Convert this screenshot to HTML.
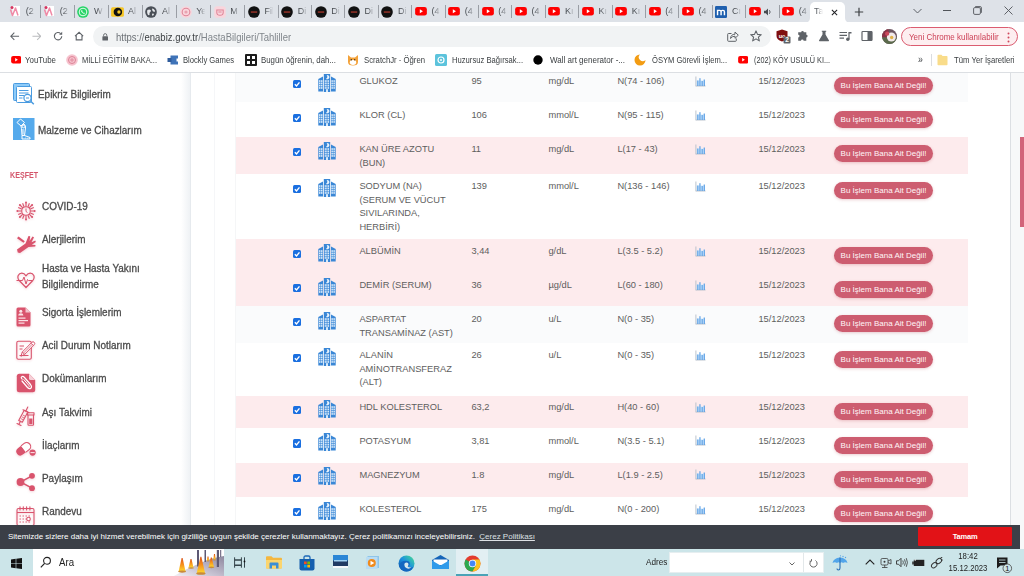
<!DOCTYPE html>
<html lang="tr"><head><meta charset="utf-8"><title>Tahliller</title>
<style>
*{box-sizing:border-box;margin:0;padding:0}
html,body{width:1024px;height:576px;overflow:hidden;background:#fff;font-family:"Liberation Sans",Arial,sans-serif;}
.a{position:absolute}
#tabs{left:0;top:0;width:1024px;height:22.4px;background:#dee2e8}
#tool{left:0;top:23px;width:1024px;height:26px;background:#fff}
#bm{left:0;top:49px;width:1024px;height:24px;background:#fff;border-bottom:1px solid #dcdfe3}
.tab{position:absolute;top:0;height:23px;font-size:9px;color:#484c51;line-height:23px;white-space:nowrap;overflow:hidden}
.tsep{position:absolute;top:4.5px;width:1px;height:13px;background:#9a9ea5}
.bmt{position:absolute;top:0;font-size:9px;line-height:22px;color:#3c4043;white-space:nowrap;transform-origin:0 50%;transform:scaleX(.875)}
#page{left:0;top:73px;width:1024px;height:452px;background:#fff;overflow:hidden}
.st{position:absolute;font-size:10.5px;color:#4a4a4a;white-space:nowrap;transform-origin:0 50%;transform:scaleX(.945);line-height:16px;-webkit-text-stroke:.3px #4a4a4a}
.row{position:absolute;left:235.5px;width:732.5px}
.c{position:absolute;font-size:9.3px;line-height:13.3px;color:#5e5e5e;white-space:nowrap}
.btn{position:absolute;left:834px;width:99px;height:17.2px;border-radius:9px;background:#cd5d70;color:#fff6f7;font-size:8px;line-height:17.2px;text-align:center;white-space:nowrap;box-shadow:0 1px 3px rgba(180,60,70,.25)}
.cb{position:absolute;left:292.7px;width:8.3px;height:8.3px;border-radius:1.5px;background:#1a6fe0}
#cookie{left:0;top:525px;width:1024px;height:23.5px;background:#3b3f47;color:#fff;font-size:8px;line-height:24px}
#task{left:0;top:548.5px;width:1024px;height:27.5px;background:#cce5e9}
</style></head><body>

<svg width="0" height="0" style="position:absolute"><defs><symbol id="hosp" viewBox="0 0 18 18"><path d="M5.800 0H12.200V18H5.800Z" fill="#3a87d6"/><path d="M.3 5L5 2.600V17.600H.3Z" fill="#3a87d6"/><path d="M17.700 5L13 2.600V17.600H17.700Z" fill="#3a87d6"/><path d="M8.600 1A2.200 2.200 0 1 1 7.900 4.900A2.700 2.700 0 0 0 8.600 1Z" fill="#e8f3fd"/><rect x="1" y="6.2" width="1.500" height="1.700" fill="#d6e9fa"/><rect x="3" y="6.2" width="1.500" height="1.700" fill="#d6e9fa"/><rect x="13.4" y="6.2" width="1.500" height="1.700" fill="#d6e9fa"/><rect x="15.4" y="6.2" width="1.500" height="1.700" fill="#d6e9fa"/><rect x="6.7" y="6.2" width="1.200" height="1.700" fill="#d6e9fa"/><rect x="8.3" y="6.2" width="1.200" height="1.700" fill="#d6e9fa"/><rect x="9.9" y="6.2" width="1.200" height="1.700" fill="#d6e9fa"/><rect x="1" y="8.5" width="1.500" height="1.700" fill="#d6e9fa"/><rect x="3" y="8.5" width="1.500" height="1.700" fill="#d6e9fa"/><rect x="13.4" y="8.5" width="1.500" height="1.700" fill="#d6e9fa"/><rect x="15.4" y="8.5" width="1.500" height="1.700" fill="#d6e9fa"/><rect x="6.7" y="8.5" width="1.200" height="1.700" fill="#d6e9fa"/><rect x="8.3" y="8.5" width="1.200" height="1.700" fill="#d6e9fa"/><rect x="9.9" y="8.5" width="1.200" height="1.700" fill="#d6e9fa"/><rect x="1" y="10.8" width="1.500" height="1.700" fill="#d6e9fa"/><rect x="3" y="10.8" width="1.500" height="1.700" fill="#d6e9fa"/><rect x="13.4" y="10.8" width="1.500" height="1.700" fill="#d6e9fa"/><rect x="15.4" y="10.8" width="1.500" height="1.700" fill="#d6e9fa"/><rect x="6.7" y="10.8" width="1.200" height="1.700" fill="#d6e9fa"/><rect x="8.3" y="10.8" width="1.200" height="1.700" fill="#d6e9fa"/><rect x="9.9" y="10.8" width="1.200" height="1.700" fill="#d6e9fa"/><rect x="1" y="13.1" width="1.500" height="1.700" fill="#d6e9fa"/><rect x="3" y="13.1" width="1.500" height="1.700" fill="#d6e9fa"/><rect x="13.4" y="13.1" width="1.500" height="1.700" fill="#d6e9fa"/><rect x="15.4" y="13.1" width="1.500" height="1.700" fill="#d6e9fa"/><rect x="6.7" y="13.1" width="1.200" height="1.700" fill="#d6e9fa"/><rect x="8.3" y="13.1" width="1.200" height="1.700" fill="#d6e9fa"/><rect x="9.9" y="13.1" width="1.200" height="1.700" fill="#d6e9fa"/><rect x="8" y="15.200" width="2" height="2.800" fill="#d6e9fa"/></symbol><symbol id="chart" viewBox="0 0 11 11"><path d="M1.500 4.500H10V10H1.500Z" fill="#d3e9fc"/><path d="M.9 .5V10.300M.9 10H10.500" stroke="#b4bdc8" stroke-width=".9" fill="none"/><rect x="2.3" y="4.5" width="1.100" height="5.5" fill="#5199e3"/><rect x="4.4" y="2.2" width="1.100" height="7.8" fill="#5199e3"/><rect x="6.6" y="5" width="1.100" height="5" fill="#5199e3"/><rect x="8.7" y="3.5" width="1.100" height="6.5" fill="#5199e3"/></symbol></defs></svg>
<div id="tabs" class="a">
<svg class="a" style="left:9.0px;top:5.0px" width="12" height="12" viewBox="0 0 12 12"><rect x="3.500" y="1" width="7.500" height="10" fill="#fff"/><path d="M1.500 4.500L3.500 10.500L6.500 3L9 10.500" stroke="#f08aa6" stroke-width="1.500" fill="none" stroke-linejoin="round"/><circle cx="3" cy="2.500" r="1.500" fill="#d6335e"/></svg>
<div class="tab" style="left:25.7px;width:10px;-webkit-mask-image:linear-gradient(90deg,#000 30%,transparent 95%)">(2</div>
<svg class="a" style="left:43.1px;top:5.0px" width="12" height="12" viewBox="0 0 12 12"><rect x="3.500" y="1" width="7.500" height="10" fill="#fff"/><path d="M1.500 4.500L3.500 10.500L6.500 3L9 10.500" stroke="#f08aa6" stroke-width="1.500" fill="none" stroke-linejoin="round"/><circle cx="3" cy="2.500" r="1.500" fill="#d6335e"/></svg>
<div class="tab" style="left:59.8px;width:10px;-webkit-mask-image:linear-gradient(90deg,#000 30%,transparent 95%)">(2</div>
<div class="tsep" style="left:39.5px"></div>
<svg class="a" style="left:77.2px;top:5.5px" width="12" height="12" viewBox="0 0 15 15"><circle cx="7.500" cy="7.500" r="7.300" fill="#25d366"/><circle cx="7.500" cy="7.500" r="4.800" fill="none" stroke="#fff" stroke-width="1.100"/><path d="M5.500 5.200c-.5.500-.4 1.700.8 3s2.500 1.800 3.100 1.400l.4-.8-1.200-.7-.5.500c-.6-.3-1.300-1-1.600-1.600l.5-.5-.6-1.300z" fill="#fff"/></svg>
<div class="tab" style="left:93.9px;width:10px;-webkit-mask-image:linear-gradient(90deg,#000 30%,transparent 95%)">W</div>
<div class="tsep" style="left:73.6px"></div>
<svg class="a" style="left:110.8px;top:5.5px" width="13" height="12" viewBox="0 0 16 15"><rect x="0" y="1.500" width="16" height="12" rx="2" fill="#f6c624"/><circle cx="8.500" cy="7.500" r="5.300" fill="#111"/><circle cx="9.800" cy="7.500" r="2.100" fill="#f6c624"/></svg>
<div class="tab" style="left:128.0px;width:10px;-webkit-mask-image:linear-gradient(90deg,#000 30%,transparent 95%)">Al</div>
<div class="tsep" style="left:107.7px"></div>
<svg class="a" style="left:145.4px;top:5.5px" width="12" height="12" viewBox="0 0 15 15"><circle cx="7.500" cy="7.500" r="7.300" fill="#4a4f57"/><path d="M3 5c1.500-1 3-1 4 0s0 2.500-1 3 .5 3-1 3.500S2 8 3 5zM9 3c1.500 0 3 1.500 3.500 3s-1 1.500-2 1-2-3-1.500-4zM9.500 9.500c1 0 2 .5 1.500 1.500s-1.500 1.500-2 1 0-2.500.5-2.500z" fill="#e8eaed"/></svg>
<div class="tab" style="left:162.1px;width:10px;-webkit-mask-image:linear-gradient(90deg,#000 30%,transparent 95%)">Al</div>
<div class="tsep" style="left:141.8px"></div>
<svg class="a" style="left:179.5px;top:5.5px" width="12" height="12" viewBox="0 0 15 15"><circle cx="7.500" cy="7.500" r="7.300" fill="#f9d5dc"/><circle cx="7.500" cy="7.500" r="4.800" fill="none" stroke="#df8598" stroke-width="1.300"/><circle cx="7.500" cy="7.500" r="2" fill="#e9a3b1"/></svg>
<div class="tab" style="left:196.2px;width:10px;-webkit-mask-image:linear-gradient(90deg,#000 30%,transparent 95%)">Ye</div>
<div class="tsep" style="left:175.9px"></div>
<svg class="a" style="left:213.6px;top:5.5px" width="12" height="12" viewBox="0 0 15 15"><rect x=".3" y=".3" width="14.400" height="14.400" rx="3.500" fill="#f9d5dc"/><path d="M3.500 5H11.500V8Q11.500 11.500 7.500 11.500Q3.500 11.500 3.500 8Z" fill="none" stroke="#df8598" stroke-width="1.300"/><path d="M5.500 7.500H9.500" stroke="#df8598" stroke-width="1.200"/></svg>
<div class="tab" style="left:230.3px;width:10px;-webkit-mask-image:linear-gradient(90deg,#000 30%,transparent 95%)">M</div>
<div class="tsep" style="left:210.0px"></div>
<svg class="a" style="left:247.7px;top:5.5px" width="12" height="12" viewBox="0 0 15 15"><circle cx="7.500" cy="7.500" r="7.300" fill="#111"/><rect x="3.500" y="6.800" width="8" height="1.500" fill="#b5382c"/></svg>
<div class="tab" style="left:264.4px;width:10px;-webkit-mask-image:linear-gradient(90deg,#000 30%,transparent 95%)">Fil</div>
<div class="tsep" style="left:244.1px"></div>
<svg class="a" style="left:281.1px;top:5.5px" width="12" height="12" viewBox="0 0 15 15"><circle cx="7.500" cy="7.500" r="7.300" fill="#111"/><rect x="3.500" y="6.800" width="8" height="1.500" fill="#b5382c"/></svg>
<div class="tab" style="left:297.8px;width:10px;-webkit-mask-image:linear-gradient(90deg,#000 30%,transparent 95%)">Di</div>
<div class="tsep" style="left:277.5px"></div>
<svg class="a" style="left:314.5px;top:5.5px" width="12" height="12" viewBox="0 0 15 15"><circle cx="7.500" cy="7.500" r="7.300" fill="#111"/><rect x="3.500" y="6.800" width="8" height="1.500" fill="#b5382c"/></svg>
<div class="tab" style="left:331.2px;width:10px;-webkit-mask-image:linear-gradient(90deg,#000 30%,transparent 95%)">Di</div>
<div class="tsep" style="left:310.9px"></div>
<svg class="a" style="left:347.9px;top:5.5px" width="12" height="12" viewBox="0 0 15 15"><circle cx="7.500" cy="7.500" r="7.300" fill="#111"/><rect x="3.500" y="6.800" width="8" height="1.500" fill="#b5382c"/></svg>
<div class="tab" style="left:364.6px;width:10px;-webkit-mask-image:linear-gradient(90deg,#000 30%,transparent 95%)">Di</div>
<div class="tsep" style="left:344.3px"></div>
<svg class="a" style="left:381.3px;top:5.5px" width="12" height="12" viewBox="0 0 15 15"><circle cx="7.500" cy="7.500" r="7.300" fill="#111"/><rect x="3.500" y="6.800" width="8" height="1.500" fill="#b5382c"/></svg>
<div class="tab" style="left:398.0px;width:10px;-webkit-mask-image:linear-gradient(90deg,#000 30%,transparent 95%)">Di</div>
<div class="tsep" style="left:377.7px"></div>
<svg class="a" style="left:414.7px;top:7.3px" width="12" height="8.600" viewBox="0 0 15 11"><rect width="15" height="11" rx="3" fill="#f00"/><path d="M6 3L10 5.500L6 8Z" fill="#fff"/></svg>
<div class="tab" style="left:431.4px;width:10px;-webkit-mask-image:linear-gradient(90deg,#000 30%,transparent 95%)">(4</div>
<div class="tsep" style="left:411.1px"></div>
<svg class="a" style="left:448.1px;top:7.3px" width="12" height="8.600" viewBox="0 0 15 11"><rect width="15" height="11" rx="3" fill="#f00"/><path d="M6 3L10 5.500L6 8Z" fill="#fff"/></svg>
<div class="tab" style="left:464.8px;width:10px;-webkit-mask-image:linear-gradient(90deg,#000 30%,transparent 95%)">(4</div>
<div class="tsep" style="left:444.5px"></div>
<svg class="a" style="left:481.5px;top:7.3px" width="12" height="8.600" viewBox="0 0 15 11"><rect width="15" height="11" rx="3" fill="#f00"/><path d="M6 3L10 5.500L6 8Z" fill="#fff"/></svg>
<div class="tab" style="left:498.2px;width:10px;-webkit-mask-image:linear-gradient(90deg,#000 30%,transparent 95%)">(4</div>
<div class="tsep" style="left:477.9px"></div>
<svg class="a" style="left:514.9px;top:7.3px" width="12" height="8.600" viewBox="0 0 15 11"><rect width="15" height="11" rx="3" fill="#f00"/><path d="M6 3L10 5.500L6 8Z" fill="#fff"/></svg>
<div class="tab" style="left:531.6px;width:10px;-webkit-mask-image:linear-gradient(90deg,#000 30%,transparent 95%)">(4</div>
<div class="tsep" style="left:511.3px"></div>
<svg class="a" style="left:548.3px;top:7.3px" width="12" height="8.600" viewBox="0 0 15 11"><rect width="15" height="11" rx="3" fill="#f00"/><path d="M6 3L10 5.500L6 8Z" fill="#fff"/></svg>
<div class="tab" style="left:565.0px;width:10px;-webkit-mask-image:linear-gradient(90deg,#000 30%,transparent 95%)">Kı</div>
<div class="tsep" style="left:544.7px"></div>
<svg class="a" style="left:581.7px;top:7.3px" width="12" height="8.600" viewBox="0 0 15 11"><rect width="15" height="11" rx="3" fill="#f00"/><path d="M6 3L10 5.500L6 8Z" fill="#fff"/></svg>
<div class="tab" style="left:598.4px;width:10px;-webkit-mask-image:linear-gradient(90deg,#000 30%,transparent 95%)">Kı</div>
<div class="tsep" style="left:578.1px"></div>
<svg class="a" style="left:615.1px;top:7.3px" width="12" height="8.600" viewBox="0 0 15 11"><rect width="15" height="11" rx="3" fill="#f00"/><path d="M6 3L10 5.500L6 8Z" fill="#fff"/></svg>
<div class="tab" style="left:631.8px;width:10px;-webkit-mask-image:linear-gradient(90deg,#000 30%,transparent 95%)">Kı</div>
<div class="tsep" style="left:611.5px"></div>
<svg class="a" style="left:648.5px;top:7.3px" width="12" height="8.600" viewBox="0 0 15 11"><rect width="15" height="11" rx="3" fill="#f00"/><path d="M6 3L10 5.500L6 8Z" fill="#fff"/></svg>
<div class="tab" style="left:665.2px;width:10px;-webkit-mask-image:linear-gradient(90deg,#000 30%,transparent 95%)">(4</div>
<div class="tsep" style="left:644.9px"></div>
<svg class="a" style="left:681.9px;top:7.3px" width="12" height="8.600" viewBox="0 0 15 11"><rect width="15" height="11" rx="3" fill="#f00"/><path d="M6 3L10 5.500L6 8Z" fill="#fff"/></svg>
<div class="tab" style="left:698.6px;width:10px;-webkit-mask-image:linear-gradient(90deg,#000 30%,transparent 95%)">(4</div>
<div class="tsep" style="left:678.3px"></div>
<svg class="a" style="left:715.3px;top:5.5px" width="12" height="12" viewBox="0 0 15 15"><rect width="15" height="15" rx="1.500" fill="#1f5fae"/><path d="M3.200 11.500V5.500H5.800Q7.600 5.500 7.600 7.300V11.500M7.600 7.300Q7.600 5.500 9.400 5.500H10Q11.800 5.500 11.800 7.300V11.500" stroke="#fff" stroke-width="1.800" fill="none"/></svg>
<div class="tab" style="left:732.0px;width:10px;-webkit-mask-image:linear-gradient(90deg,#000 30%,transparent 95%)">Cı</div>
<div class="tsep" style="left:711.7px"></div>
<svg class="a" style="left:748.7px;top:7.3px" width="12" height="8.600" viewBox="0 0 15 11"><rect width="15" height="11" rx="3" fill="#f00"/><path d="M6 3L10 5.500L6 8Z" fill="#fff"/></svg>
<svg class="a" style="left:763.9px;top:7.500px" width="8" height="8" viewBox="0 0 9 9"><path d="M0 3h2l2.500-2.500v8L2 6H0z" fill="#474b50"/><path d="M6 2.500c1 .8 1 3.200 0 4" stroke="#474b50" stroke-width="1" fill="none"/></svg>
<div class="tsep" style="left:745.1px"></div>
<svg class="a" style="left:782.1px;top:7.3px" width="12" height="8.600" viewBox="0 0 15 11"><rect width="15" height="11" rx="3" fill="#f00"/><path d="M6 3L10 5.500L6 8Z" fill="#fff"/></svg>
<div class="tab" style="left:798.8px;width:10px;-webkit-mask-image:linear-gradient(90deg,#000 30%,transparent 95%)">(4</div>
<div class="tsep" style="left:778.5px"></div>
<div class="a" style="left:810px;top:2px;width:35px;height:21px;background:#fff;border-radius:5px 5px 0 0"></div>
<svg class="a" style="left:805px;top:18px" width="5" height="5" viewBox="0 0 6 6"><path d="M6 0V6H0A6 6 0 0 0 6 0Z" fill="#fff"/></svg>
<svg class="a" style="left:845px;top:18px" width="5" height="5" viewBox="0 0 6 6"><path d="M0 0V6H6A6 6 0 0 1 0 0Z" fill="#fff"/></svg>
<div class="tab" style="left:814px;width:9px;color:#5f6368;-webkit-mask-image:linear-gradient(90deg,#000 30%,transparent 100%)">Ta</div>
<svg class="a" style="left:830.500px;top:8.500px" width="7" height="7" viewBox="0 0 8 8"><path d="M1 1L7 7M7 1L1 7" stroke="#202124" stroke-width="1.200"/></svg>
<svg class="a" style="left:854px;top:7px" width="10" height="10" viewBox="0 0 10 10"><path d="M5 .8V9.200M.8 5H9.200" stroke="#3c4043" stroke-width="1.200"/></svg>
<svg class="a" style="left:913px;top:8px" width="9" height="6" viewBox="0 0 9 6"><path d="M.5 1L4.500 5L8.500 1" stroke="#5f6368" stroke-width="1" fill="none"/></svg>
<div class="a" style="left:943px;top:10px;width:8px;height:1px;background:#505459"></div>
<svg class="a" style="left:973px;top:6px" width="9" height="9" viewBox="0 0 9 9"><rect x=".6" y="1.600" width="6.800" height="6.800" rx="1.200" fill="none" stroke="#505459" stroke-width=".9"/><path d="M2.200 .6H7.200Q8.400 .6 8.400 1.800V6.800" fill="none" stroke="#505459" stroke-width=".9"/></svg>
<svg class="a" style="left:1004px;top:6px" width="9" height="9" viewBox="0 0 9 9"><path d="M.5 .5L8.500 8.500M8.500 .5L.5 8.500" stroke="#505459" stroke-width=".9"/></svg>
</div>
<div id="tool" class="a">
<svg class="a" style="left:10px;top:9px" width="9.500" height="8.600" viewBox="0 0 11 10"><path d="M5 .8L.9 5L5 9.200M1 5H10.500" stroke="#5f6368" stroke-width="1.200" fill="none"/></svg>
<svg class="a" style="left:31.500px;top:9px" width="9.500" height="8.600" viewBox="0 0 11 10"><path d="M6 .8L10.100 5L6 9.200M10 5H.5" stroke="#babcbe" stroke-width="1.200" fill="none"/></svg>
<svg class="a" style="left:52.500px;top:8px" width="10.500" height="10.500" viewBox="0 0 12 12"><path d="M10 6A4.200 4.200 0 1 1 8.700 2.900" stroke="#5f6368" stroke-width="1.300" fill="none"/><path d="M10.500 .8V4.300H7z" fill="#5f6368"/></svg>
<svg class="a" style="left:73.800px;top:8.300px" width="10.200" height="10.200" viewBox="0 0 12 12"><path d="M1.200 6L6 1.500L10.800 6M2.600 5V10.500H9.400V5" stroke="#5f6368" stroke-width="1.300" fill="none"/></svg>
<div class="a" style="left:93px;top:3px;width:678px;height:21px;border-radius:11px;background:#f1f3f4"></div>
<svg class="a" style="left:101.800px;top:10.300px" width="6.400" height="8" viewBox="0 0 8 10"><rect x=".5" y="4" width="7" height="5.500" rx=".8" fill="#5f6368"/><path d="M2 4V2.800a2 2 0 0 1 4 0V4" stroke="#5f6368" stroke-width="1.100" fill="none"/></svg>
<div class="a" style="left:116px;top:.9px;font-size:10.400px;line-height:27px;color:#80868b;white-space:nowrap;transform-origin:0 50%;transform:scaleX(.914)"><span style="color:#6b7075">https://</span><span style="color:#3c4043">enabiz.gov.tr</span>/HastaBilgileri/Tahliller</div>
<svg class="a" style="left:727px;top:7px" width="12" height="12" viewBox="0 0 12 12"><path d="M4.500 3.500H1.500Q.7 3.500 .7 4.300V10.500Q.7 11.300 1.500 11.300H8.500Q9.300 11.300 9.300 10.500V8.500" fill="none" stroke="#5f6368" stroke-width="1"/><path d="M3.500 8.500Q3.800 4.300 8 4.200V2L11.300 5.200L8 8.300V6.200Q5 6.200 3.500 8.500z" fill="none" stroke="#5f6368" stroke-width="1" stroke-linejoin="round"/></svg>
<svg class="a" style="left:750px;top:7px" width="12" height="12" viewBox="0 0 12 12"><path d="M6 .9L7.500 4.400L11.300 4.700L8.400 7.200L9.300 10.900L6 8.900L2.700 10.900L3.600 7.200L.7 4.700L4.500 4.400Z" fill="none" stroke="#5f6368" stroke-width="1.100" stroke-linejoin="round"/></svg>
<svg class="a" style="left:776px;top:6px" width="15" height="15" viewBox="0 0 15 15"><path d="M6 .5L11.500 2.300V7Q11.500 10.500 6 12.500Q.5 10.500 .5 7V2.300Z" fill="#800f0f"/><text x="6" y="8.500" font-size="5.500" font-weight="700" fill="#fff" text-anchor="middle" font-family="Liberation Sans,sans-serif">uo</text><rect x="7.500" y="7.500" width="7" height="7" rx="1" fill="#5f6368"/><text x="11" y="13.300" font-size="6.500" font-weight="700" fill="#fff" text-anchor="middle" font-family="Liberation Sans,sans-serif">2</text></svg>
<svg class="a" style="left:797px;top:7px" width="12" height="12" viewBox="0 0 12 12"><path d="M4.200 2.200a1.300 1.300 0 0 1 2.600 0H9.300V4.800a1.300 1.300 0 0 1 0 2.600V10.800H6.600a1.300 1.300 0 0 0-2.600 0H1.200V7.400a1.300 1.300 0 0 0 0-2.600V2.200z" fill="#5f6368"/></svg>
<svg class="a" style="left:818px;top:7px" width="12" height="12" viewBox="0 0 12 12"><path d="M3.800 .8H8.200V1.800H7.500V4.500L11 10.500Q11.300 11.300 10.400 11.300H1.600Q.7 11.300 1 10.500L4.500 4.500V1.800H3.800z" fill="#5f6368"/></svg>
<svg class="a" style="left:839px;top:7px" width="13" height="12" viewBox="0 0 13 12"><path d="M.5 2.500H8M.5 5.300H8M.5 8.100H5" stroke="#5f6368" stroke-width="1.200"/><path d="M10 2V9" stroke="#5f6368" stroke-width="1.200"/><circle cx="8.800" cy="9.200" r="1.700" fill="#5f6368"/><path d="M10 2H12.500V3.500H10z" fill="#5f6368"/></svg>
<svg class="a" style="left:861px;top:7px" width="12" height="12" viewBox="0 0 12 12"><rect x="1" y="1.500" width="10" height="9" rx=".8" fill="none" stroke="#5f6368" stroke-width="1.200"/><rect x="6.500" y="1.500" width="4.500" height="9" fill="#5f6368"/></svg>
<svg class="a" style="left:881.500px;top:6px" width="15" height="15" viewBox="0 0 16 16"><defs><clipPath id="av"><circle cx="8" cy="8" r="8"/></clipPath></defs><g clip-path="url(#av)"><rect width="16" height="16" fill="#6b5560"/><rect x="0" y="0" width="7" height="9" fill="#8a3145"/><rect x="0" y="9" width="16" height="7" fill="#5b6a4c"/><circle cx="10" cy="8.500" r="4.800" fill="#f1e9ea"/><circle cx="5.500" cy="5" r="2.300" fill="#c9485c"/><circle cx="10.300" cy="9" r="1.800" fill="#e0b24a"/></g></svg>
<div class="a" style="left:900.500px;top:4.300px;width:117px;height:18.700px;border-radius:10px;background:#fdeef0;border:1px solid #db5c70"></div>
<div class="a" style="left:909px;top:.6px;font-size:9.200px;line-height:27px;color:#cc3f55;white-space:nowrap;transform-origin:0 50%;transform:scaleX(.868)">Yeni Chrome kullanılabilir</div>
<svg class="a" style="left:1007px;top:8.500px" width="3" height="11" viewBox="0 0 3 11"><circle cx="1.500" cy="1.500" r="1" fill="#d0485c"/><circle cx="1.500" cy="5.500" r="1" fill="#d0485c"/><circle cx="1.500" cy="9.500" r="1" fill="#d0485c"/></svg>
</div>
<div id="bm" class="a">
<svg class="a" style="left:10.5px;top:7.2px" width="10.400" height="7.600" viewBox="0 0 12 9"><rect width="12" height="9" rx="2.400" fill="#f00"/><path d="M4.800 2.500L8 4.500L4.800 6.500z" fill="#fff"/></svg>
<div class="bmt" style="left:25px;transform:scaleX(0.876)">YouTube</div>
<svg class="a" style="left:66px;top:5px" width="12" height="12" viewBox="0 0 12 12"><circle cx="6" cy="6" r="5.800" fill="#f6c3ce"/><circle cx="6" cy="6" r="3.500" fill="none" stroke="#de8497" stroke-width="1"/><path d="M4 6h4M6 4v4" stroke="#de8497" stroke-width=".8"/></svg>
<div class="bmt" style="left:82px;transform:scaleX(0.833)">MİLLİ EĞİTİM BAKA...</div>
<svg class="a" style="left:167px;top:5px" width="12" height="12" viewBox="0 0 12 12"><path d="M3.500 1.500H11V4.500H9.500V7.500H11V10.500H3.500V8a1.500 1.500 0 0 1 0-4z" fill="#3f73b8"/><rect x=".5" y="4" width="4" height="4" fill="#2f5c9c"/></svg>
<div class="bmt" style="left:183px;transform:scaleX(0.849)">Blockly Games</div>
<svg class="a" style="left:245px;top:5px" width="12" height="12" viewBox="0 0 12 12"><rect width="12" height="12" rx="1" fill="#1d1d1d"/><rect x="2" y="2" width="3" height="3" fill="#fff"/><rect x="7" y="2" width="3" height="3" fill="#fff"/><rect x="2" y="7" width="3" height="3" fill="#fff"/><rect x="7" y="7" width="3" height="3" fill="#fff"/></svg>
<div class="bmt" style="left:261px;transform:scaleX(0.871)">Bugün öğrenin, dah...</div>
<svg class="a" style="left:347px;top:5px" width="12" height="12" viewBox="0 0 12 12"><path d="M1 1L4 3.500H8L11 1V8Q11 11.500 6 11.500Q1 11.500 1 8z" fill="#f3a23a"/><ellipse cx="6" cy="8.500" rx="3.200" ry="2.400" fill="#fff"/><circle cx="4.300" cy="5.800" r=".7" fill="#333"/><circle cx="7.700" cy="5.800" r=".7" fill="#333"/></svg>
<div class="bmt" style="left:364px;transform:scaleX(0.859)">ScratchJr - Öğren</div>
<svg class="a" style="left:435px;top:5px" width="12" height="12" viewBox="0 0 12 12"><rect width="12" height="12" rx="1.500" fill="#5cc3dc"/><circle cx="6" cy="6" r="3" fill="none" stroke="#fff" stroke-width="1.200"/><circle cx="6" cy="6" r="1" fill="#fff"/></svg>
<div class="bmt" style="left:452px;transform:scaleX(0.850)">Huzursuz Bağırsak...</div>
<svg class="a" style="left:532px;top:5px" width="12" height="12" viewBox="0 0 12 12"><circle cx="6" cy="6" r="4.700" fill="#000"/></svg>
<div class="bmt" style="left:549.5px;transform:scaleX(0.891)">Wall art generator -...</div>
<svg class="a" style="left:634px;top:5px" width="12" height="12" viewBox="0 0 12 12"><path d="M6 .5A5.500 5.500 0 1 0 11.500 6A3.200 3.200 0 0 1 6 .5z" fill="#f39c12"/></svg>
<div class="bmt" style="left:652px;transform:scaleX(0.843)">ÖSYM Görevli İşlem...</div>
<svg class="a" style="left:737.5px;top:7.2px" width="10.400" height="7.600" viewBox="0 0 12 9"><rect width="12" height="9" rx="2.400" fill="#f00"/><path d="M4.800 2.500L8 4.500L4.800 6.500z" fill="#fff"/></svg>
<div class="bmt" style="left:754px;transform:scaleX(0.810)">(202) KÖY USULÜ KI...</div>
<div class="bmt" style="left:918px;font-size:10px">»</div>
<div class="a" style="left:931px;top:5px;width:1px;height:12px;background:#dadce0"></div>
<svg class="a" style="left:937px;top:5px" width="11" height="12" viewBox="0 0 11 12"><path d="M.5 1.500Q.5 .8 1.200 .8H4.500L5.500 2H9.800Q10.500 2 10.500 2.700V10.500Q10.500 11.200 9.800 11.200H1.200Q.5 11.200 .5 10.500z" fill="#f9dc8a"/></svg>
<div class="bmt" style="left:953.500px;transform:scaleX(.858)">Tüm Yer İşaretleri</div>
</div>
<div id="page" class="a">
</div>
<div class="a" style="left:0;top:73px;width:1024px;height:452px;overflow:hidden"><div class="a" style="left:0;top:-73px;width:1024px;height:576px">
<div class="a" style="left:181px;top:73px;width:9px;height:460px;background:linear-gradient(90deg,#fff,#eff2f5)"></div>
<div class="a" style="left:190px;top:73px;width:1px;height:460px;background:#e6eaee"></div>
<div class="a" style="left:214px;top:73px;width:1px;height:460px;background:#f5f6f8"></div>
<div class="a" style="left:234.500px;top:73px;width:1px;height:460px;background:#f5f6f7"></div>
<div class="a" style="left:1010px;top:73px;width:14px;height:460px;background:#f7f8f9"></div>
<div class="a" style="left:1009.500px;top:73px;width:1px;height:460px;background:#dcdfe3"></div>
<div class="a" style="left:1019.500px;top:137px;width:5px;height:90px;background:#d2647a"></div>
<svg class="a" style="left:13px;top:82.500px" width="22" height="22" viewBox="0 0 22 22"><rect x=".5" y=".5" width="16" height="17" rx="1" fill="#8ecbf8" stroke="#4a9be0" stroke-width="1"/><rect x="3.500" y="3.500" width="15" height="16" rx="1" fill="#fff" stroke="#4a9be0" stroke-width="1"/><path d="M6 7.500H15.500M6 10H15.500M6 12.500H11M6 15H9.500" stroke="#4a9be0" stroke-width="1"/><circle cx="14.500" cy="15" r="3.600" fill="#fff" stroke="#4a9be0" stroke-width="1.200"/><path d="M13 15H16" stroke="#4a9be0" stroke-width="1"/><path d="M17.200 17.800L20.800 21.300" stroke="#4a9be0" stroke-width="1.500"/></svg>
<svg class="a" style="left:13px;top:118px" width="21.500" height="22" viewBox="0 0 21.500 22"><rect width="21.500" height="22" fill="#55aaec"/><g stroke="#fff" stroke-width="1" fill="none" stroke-linejoin="round"><path d="M7.500 1L11.500 4.500L8 8L4 4.500Z"/><path d="M8 8L11 6Q13 7.500 12.500 10L11.500 17.500L9 17.500L8.500 10.500Z"/><circle cx="10.500" cy="8.500" r="1.300"/><path d="M10 11V16.500"/><path d="M9 17.500H11.500L17 19.500V21H9Z"/><path d="M12 20H12.500M14 20.200H14.500M16 20.400H16.300"/></g></svg>
<div class="st" style="left:38px;top:85.800px">Epikriz Bilgilerim</div>
<div class="st" style="left:38px;top:121.800px;transform:scaleX(.945)">Malzeme ve Cihazlarım</div>
<div class="a" style="left:10px;top:170px;font-size:8.300px;font-weight:700;color:#d4566b;line-height:10px;transform-origin:0 50%;transform:scaleX(.86)">KEŞFET</div>
<svg class="a" style="left:16px;top:200.5px;filter:drop-shadow(0 1px 1px rgba(217,84,109,.25))" width="20" height="20" viewBox="0 0 20 20"><g stroke="#d9546d" stroke-width="1.1" fill="none"><circle cx="10" cy="10" r="4.300"/><path d="M10 1.500V5.500M10 14.500V18.500M1.500 10H5.500M14.500 10H18.500M4 4L6.800 6.800M13.200 13.200L16 16M16 4L13.200 6.800M6.800 13.200L4 16M6.600 2.200L8 5.700M13.400 2.200L12 5.700M6.600 17.800L8 14.300M13.400 17.800L12 14.300M2.200 6.600L5.700 8M2.200 13.400L5.700 12M17.800 6.600L14.300 8M17.800 13.400L14.300 12"/><path d="M10 7.500V10.500L11.500 11.500" stroke-width=".9"/></g><g fill="#d9546d"><circle cx="10" cy="1.400" r="1"/><circle cx="10" cy="18.600" r="1"/><circle cx="1.400" cy="10" r="1"/><circle cx="18.600" cy="10" r="1"/><circle cx="3.900" cy="3.900" r="1"/><circle cx="16.100" cy="16.100" r="1"/><circle cx="16.100" cy="3.900" r="1"/><circle cx="3.900" cy="16.100" r="1"/></g></svg>
<svg class="a" style="left:16px;top:233.5px;filter:drop-shadow(0 1px 1px rgba(217,84,109,.25))" width="20" height="20" viewBox="0 0 20 20"><g fill="#d9546d"><path d="M1 15.500L9.500 9.500L12.500 2L14.200 2.300L13.600 7L16.500 2.500L18 3.300L15.500 8.300L19.300 6.500L19.800 8L15.800 10.800L19.500 11L19.300 12.400L12.500 13L4 19L1.800 18.500Z"/><path d="M1 4.200L2.500 2.500L8.800 7.200L7.500 8.800Z"/></g></svg>
<svg class="a" style="left:16px;top:270px;filter:drop-shadow(0 1px 1px rgba(217,84,109,.25))" width="20" height="20" viewBox="0 0 20 20"><g stroke="#d9546d" stroke-width="1.200" fill="none" stroke-linejoin="round"><path d="M10 17.500L3.200 10.500Q1.200 8 2.200 5.500Q3.300 3.200 5.800 3.200Q8.300 3.200 10 5.800Q11.700 3.200 14.200 3.200Q16.700 3.200 17.800 5.500Q18.800 8 16.800 10.500Z"/><path d="M.5 10.500H6.500L8 7L10 14L11.500 9.500L12.500 10.500H16" stroke-width="1"/></g></svg>
<svg class="a" style="left:15px;top:307px;filter:drop-shadow(0 1px 1px rgba(217,84,109,.25))" width="20" height="20" viewBox="0 0 20 20"><path d="M1.500 2Q1.500 .5 3 .5H10.500L15.500 5.500V18Q15.500 19.500 14 19.500H3Q1.500 19.500 1.500 18Z" fill="#d9546d"/><path d="M10.500 .5V5.500H15.500Z" fill="#f3c3cc"/><g fill="#fbe4e8"><circle cx="5.800" cy="4.200" r="1.500"/><path d="M3.200 8.500Q3.200 6.300 5.800 6.300Q8.400 6.300 8.400 8.500Z"/><rect x="3.500" y="10.500" width="7" height="1.200"/><rect x="3.500" y="13" width="9.500" height="1.200"/><rect x="3.500" y="15.500" width="6" height="1.200"/></g></svg>
<svg class="a" style="left:15.5px;top:339.5px;filter:drop-shadow(0 1px 1px rgba(217,84,109,.25))" width="20" height="20" viewBox="0 0 20 20"><g stroke="#d9546d" fill="none" stroke-width="1.100" stroke-linejoin="round"><rect x=".8" y="1.200" width="14.500" height="18" rx="1.500"/><path d="M3.500 6H8M3.500 9H6.500M3.500 15.500H12.500" stroke-width="1"/></g><g stroke="#d9546d" stroke-width="1" stroke-linejoin="round"><path d="M5 16.200L6.300 12L16 2.200Q17 1.200 18.200 2.300Q19.300 3.500 18.300 4.500L8.600 14.300Z" fill="#fff"/><path d="M6.300 12L8.600 14.300M15 3.200L17.300 5.500M5 16.200L6 15.200" fill="none"/><path d="M7.500 13.100L16.100 4.400" fill="none" stroke-width=".8"/></g></svg>
<svg class="a" style="left:16px;top:373px;filter:drop-shadow(0 1px 1px rgba(217,84,109,.25))" width="20" height="20" viewBox="0 0 20 20"><path d="M.8 3.300Q.8 .8 3.300 .8H13L19.200 7V16.700Q19.200 19.200 16.700 19.200H3.300Q.8 19.200 .8 16.700Z" fill="#d9546d"/><path d="M13 .8V5.500Q13 7 14.500 7H19.200Z" fill="#f6d0d7"/><path d="M6.200 6.200Q4.500 4.500 5.800 3.700Q7 3 8.500 4.500L14.500 11.500Q16.300 13.800 14.800 15.200Q13.300 16.500 11.500 14.500L6 8" stroke="#fff" stroke-width="1.200" fill="none" stroke-linecap="round"/><path d="M7.800 6.500L12.800 12.300Q13.800 13.500 13.100 14.100" stroke="#fff" stroke-width="1" fill="none" stroke-linecap="round"/></svg>
<svg class="a" style="left:16px;top:406px;filter:drop-shadow(0 1px 1px rgba(217,84,109,.25))" width="20" height="20" viewBox="0 0 20 20"><g stroke="#d9546d" stroke-width="1.100" fill="none" stroke-linecap="round" stroke-linejoin="round"><path d="M11.800 1L10 4.800"/><path d="M8.200 4.200L11.800 6L6.300 16.200L2.700 14.400Z"/><path d="M7 3.700L13 6.700"/><path d="M4.500 15.300L2.800 18.500M1 17.500L5 19.500"/><path d="M7.200 9.200L8.600 9.900M6.200 11L7.600 11.700M5.200 12.800L6.600 13.500" stroke-width=".8"/><path d="M11.500 6.700H18V9H11.500Z"/><path d="M12 9V18.500Q12 19.300 12.800 19.300H16.700Q17.500 19.300 17.500 18.500V9"/></g><rect x="13.200" y="12.500" width="3.200" height="5.500" fill="#d9546d"/></svg>
<svg class="a" style="left:15.5px;top:439px;filter:drop-shadow(0 1px 1px rgba(217,84,109,.25))" width="20" height="20" viewBox="0 0 20 20"><g transform="rotate(-38 7.500 10)"><path d="M-.5 10A4 4 0 0 1 3.500 6H7.500V14H3.500A4 4 0 0 1-.5 10Z" fill="#d9546d"/><path d="M7.500 6H11.500A4 4 0 0 1 11.500 14H7.500" fill="#fff" stroke="#d9546d" stroke-width="1.100"/></g><circle cx="16.600" cy="13.600" r="3.100" fill="#d9546d"/><rect x="14.500" y="13.100" width="4.200" height="1" fill="#fbe4e8"/></svg>
<svg class="a" style="left:15.5px;top:472px;filter:drop-shadow(0 1px 1px rgba(217,84,109,.25))" width="20" height="20" viewBox="0 0 20 20"><g fill="#d9546d"><circle cx="4.500" cy="10" r="3.900"/><circle cx="16" cy="3.800" r="2.900"/><circle cx="16" cy="16.200" r="2.900"/></g><path d="M16 3.800L4.500 10L16 16.200" stroke="#d9546d" stroke-width="1.500" fill="none"/></svg>
<svg class="a" style="left:16px;top:505.5px;filter:drop-shadow(0 1px 1px rgba(217,84,109,.25))" width="20" height="20" viewBox="0 0 20 20"><g stroke="#d9546d" stroke-width="1.100" fill="none"><rect x="1" y="2.500" width="17" height="17" rx="1.500"/><path d="M1 6.500H18"/><path d="M4 .8V4M7.300 .8V4M10.600 .8V4M13.900 .8V4" stroke-linecap="round"/><path d="M3.500 10H15.500M3.500 13H15.500M3.500 16H15.500" stroke-dasharray="1.400 1.600" stroke-width="1"/><circle cx="12.500" cy="13" r="1.800" fill="#fff"/></g></svg>
<div class="st" style="left:42px;top:198.1px">COVID-19</div>
<div class="st" style="left:42px;top:231.17px">Alerjilerim</div>
<div class="st" style="left:42px;top:260.22px">Hasta ve Hasta Yakını</div>
<div class="st" style="left:42px;top:276.22px">Bilgilendirme</div>
<div class="st" style="left:42px;top:304.31px">Sigorta İşlemlerim</div>
<div class="st" style="left:42px;top:337.37px">Acil Durum Notlarım</div>
<div class="st" style="left:42px;top:370.44px">Dokümanlarım</div>
<div class="st" style="left:42px;top:403.5px">Aşı Takvimi</div>
<div class="st" style="left:42px;top:436.57px">İlaçlarım</div>
<div class="st" style="left:42px;top:469.63px">Paylaşım</div>
<div class="st" style="left:42px;top:502.7px">Randevu</div>
<div class="row" style="top:72px;height:30px;background:#fafbfc"></div>
<div class="c" style="left:359.4px;top:75.1px">GLUKOZ</div>
<div class="c" style="left:471.4px;top:75.1px">95</div>
<div class="c" style="left:548.4px;top:75.1px">mg/dL</div>
<div class="c" style="left:617.4px;top:75.1px">N(74 - 106)</div>
<div class="c" style="left:758.4px;top:75.1px">15/12/2023</div>
<div class="cb" style="top:80px"><svg class="a" style="left:0;top:0" width="8.300" height="8.300" viewBox="0 0 9 9"><path d="M2 4.600L3.800 6.400L7 2.600" stroke="#fff" stroke-width="1.500" fill="none"/></svg></div>
<svg class="a" style="left:318px;top:73.8px" width="18" height="18"><use href="#hosp"/></svg>
<svg class="a" style="left:694.5px;top:75.8px" width="11" height="11"><use href="#chart"/></svg>
<div class="btn" style="top:77.3px">Bu İşlem Bana Ait Değil!</div>
<div class="row" style="top:102px;height:35px;background:#ffffff"></div>
<div class="c" style="left:359.4px;top:109.1px">KLOR (CL)</div>
<div class="c" style="left:471.4px;top:109.1px">106</div>
<div class="c" style="left:548.4px;top:109.1px">mmol/L</div>
<div class="c" style="left:617.4px;top:109.1px">N(95 - 115)</div>
<div class="c" style="left:758.4px;top:109.1px">15/12/2023</div>
<div class="cb" style="top:114px"><svg class="a" style="left:0;top:0" width="8.300" height="8.300" viewBox="0 0 9 9"><path d="M2 4.600L3.800 6.400L7 2.600" stroke="#fff" stroke-width="1.500" fill="none"/></svg></div>
<svg class="a" style="left:318px;top:107.8px" width="18" height="18"><use href="#hosp"/></svg>
<svg class="a" style="left:694.5px;top:109.8px" width="11" height="11"><use href="#chart"/></svg>
<div class="btn" style="top:111.3px">Bu İşlem Bana Ait Değil!</div>
<div class="row" style="top:137px;height:36.5px;background:#fdebed"></div>
<div class="c" style="left:359.4px;top:143.1px">KAN ÜRE AZOTU</div>
<div class="c" style="left:359.4px;top:156.7px">(BUN)</div>
<div class="c" style="left:471.4px;top:143.1px">11</div>
<div class="c" style="left:548.4px;top:143.1px">mg/dL</div>
<div class="c" style="left:617.4px;top:143.1px">L(17 - 43)</div>
<div class="c" style="left:758.4px;top:143.1px">15/12/2023</div>
<div class="cb" style="top:148px"><svg class="a" style="left:0;top:0" width="8.300" height="8.300" viewBox="0 0 9 9"><path d="M2 4.600L3.800 6.400L7 2.600" stroke="#fff" stroke-width="1.500" fill="none"/></svg></div>
<svg class="a" style="left:318px;top:141.8px" width="18" height="18"><use href="#hosp"/></svg>
<svg class="a" style="left:694.5px;top:143.8px" width="11" height="11"><use href="#chart"/></svg>
<div class="btn" style="top:145.3px">Bu İşlem Bana Ait Değil!</div>
<div class="row" style="top:173.5px;height:65.5px;background:#ffffff"></div>
<div class="c" style="left:359.4px;top:180.1px">SODYUM (NA)</div>
<div class="c" style="left:359.4px;top:193.7px">(SERUM VE VÜCUT</div>
<div class="c" style="left:359.4px;top:207.3px">SIVILARINDA,</div>
<div class="c" style="left:359.4px;top:220.9px">HERBİRİ)</div>
<div class="c" style="left:471.4px;top:180.1px">139</div>
<div class="c" style="left:548.4px;top:180.1px">mmol/L</div>
<div class="c" style="left:617.4px;top:180.1px">N(136 - 146)</div>
<div class="c" style="left:758.4px;top:180.1px">15/12/2023</div>
<div class="cb" style="top:185px"><svg class="a" style="left:0;top:0" width="8.300" height="8.300" viewBox="0 0 9 9"><path d="M2 4.600L3.800 6.400L7 2.600" stroke="#fff" stroke-width="1.500" fill="none"/></svg></div>
<svg class="a" style="left:318px;top:178.8px" width="18" height="18"><use href="#hosp"/></svg>
<svg class="a" style="left:694.5px;top:180.8px" width="11" height="11"><use href="#chart"/></svg>
<div class="btn" style="top:182.3px">Bu İşlem Bana Ait Değil!</div>
<div class="row" style="top:239px;height:33.5px;background:#fdebed"></div>
<div class="c" style="left:359.4px;top:245.1px">ALBÜMİN</div>
<div class="c" style="left:471.4px;top:245.1px">3,44</div>
<div class="c" style="left:548.4px;top:245.1px">g/dL</div>
<div class="c" style="left:617.4px;top:245.1px">L(3.5 - 5.2)</div>
<div class="c" style="left:758.4px;top:245.1px">15/12/2023</div>
<div class="cb" style="top:250px"><svg class="a" style="left:0;top:0" width="8.300" height="8.300" viewBox="0 0 9 9"><path d="M2 4.600L3.800 6.400L7 2.600" stroke="#fff" stroke-width="1.500" fill="none"/></svg></div>
<svg class="a" style="left:318px;top:243.8px" width="18" height="18"><use href="#hosp"/></svg>
<svg class="a" style="left:694.5px;top:245.8px" width="11" height="11"><use href="#chart"/></svg>
<div class="btn" style="top:247.3px">Bu İşlem Bana Ait Değil!</div>
<div class="row" style="top:272.5px;height:33.0px;background:#fdebed"></div>
<div class="c" style="left:359.4px;top:279.1px">DEMİR (SERUM)</div>
<div class="c" style="left:471.4px;top:279.1px">36</div>
<div class="c" style="left:548.4px;top:279.1px">µg/dL</div>
<div class="c" style="left:617.4px;top:279.1px">L(60 - 180)</div>
<div class="c" style="left:758.4px;top:279.1px">15/12/2023</div>
<div class="cb" style="top:284px"><svg class="a" style="left:0;top:0" width="8.300" height="8.300" viewBox="0 0 9 9"><path d="M2 4.600L3.800 6.400L7 2.600" stroke="#fff" stroke-width="1.500" fill="none"/></svg></div>
<svg class="a" style="left:318px;top:277.8px" width="18" height="18"><use href="#hosp"/></svg>
<svg class="a" style="left:694.5px;top:279.8px" width="11" height="11"><use href="#chart"/></svg>
<div class="btn" style="top:281.3px">Bu İşlem Bana Ait Değil!</div>
<div class="row" style="top:305.5px;height:37.5px;background:#fafbfc"></div>
<div class="c" style="left:359.4px;top:313.1px">ASPARTAT</div>
<div class="c" style="left:359.4px;top:326.7px">TRANSAMİNAZ (AST)</div>
<div class="c" style="left:471.4px;top:313.1px">20</div>
<div class="c" style="left:548.4px;top:313.1px">u/L</div>
<div class="c" style="left:617.4px;top:313.1px">N(0 - 35)</div>
<div class="c" style="left:758.4px;top:313.1px">15/12/2023</div>
<div class="cb" style="top:318px"><svg class="a" style="left:0;top:0" width="8.300" height="8.300" viewBox="0 0 9 9"><path d="M2 4.600L3.800 6.400L7 2.600" stroke="#fff" stroke-width="1.500" fill="none"/></svg></div>
<svg class="a" style="left:318px;top:311.8px" width="18" height="18"><use href="#hosp"/></svg>
<svg class="a" style="left:694.5px;top:313.8px" width="11" height="11"><use href="#chart"/></svg>
<div class="btn" style="top:315.3px">Bu İşlem Bana Ait Değil!</div>
<div class="row" style="top:343px;height:52.5px;background:#ffffff"></div>
<div class="c" style="left:359.4px;top:349.1px">ALANİN</div>
<div class="c" style="left:359.4px;top:362.7px">AMİNOTRANSFERAZ</div>
<div class="c" style="left:359.4px;top:376.3px">(ALT)</div>
<div class="c" style="left:471.4px;top:349.1px">26</div>
<div class="c" style="left:548.4px;top:349.1px">u/L</div>
<div class="c" style="left:617.4px;top:349.1px">N(0 - 35)</div>
<div class="c" style="left:758.4px;top:349.1px">15/12/2023</div>
<div class="cb" style="top:354px"><svg class="a" style="left:0;top:0" width="8.300" height="8.300" viewBox="0 0 9 9"><path d="M2 4.600L3.800 6.400L7 2.600" stroke="#fff" stroke-width="1.500" fill="none"/></svg></div>
<svg class="a" style="left:318px;top:347.8px" width="18" height="18"><use href="#hosp"/></svg>
<svg class="a" style="left:694.5px;top:349.8px" width="11" height="11"><use href="#chart"/></svg>
<div class="btn" style="top:351.3px">Bu İşlem Bana Ait Değil!</div>
<div class="row" style="top:395.5px;height:32.3px;background:#fdebed"></div>
<div class="c" style="left:359.4px;top:400.9px">HDL KOLESTEROL</div>
<div class="c" style="left:471.4px;top:400.9px">63,2</div>
<div class="c" style="left:548.4px;top:400.9px">mg/dL</div>
<div class="c" style="left:617.4px;top:400.9px">H(40 - 60)</div>
<div class="c" style="left:758.4px;top:400.9px">15/12/2023</div>
<div class="cb" style="top:405.8px"><svg class="a" style="left:0;top:0" width="8.300" height="8.300" viewBox="0 0 9 9"><path d="M2 4.600L3.800 6.400L7 2.600" stroke="#fff" stroke-width="1.500" fill="none"/></svg></div>
<svg class="a" style="left:318px;top:399.6px" width="18" height="18"><use href="#hosp"/></svg>
<svg class="a" style="left:694.5px;top:401.6px" width="11" height="11"><use href="#chart"/></svg>
<div class="btn" style="top:403.1px">Bu İşlem Bana Ait Değil!</div>
<div class="row" style="top:427.8px;height:35.2px;background:#ffffff"></div>
<div class="c" style="left:359.4px;top:434.5px">POTASYUM</div>
<div class="c" style="left:471.4px;top:434.5px">3,81</div>
<div class="c" style="left:548.4px;top:434.5px">mmol/L</div>
<div class="c" style="left:617.4px;top:434.5px">N(3.5 - 5.1)</div>
<div class="c" style="left:758.4px;top:434.5px">15/12/2023</div>
<div class="cb" style="top:439.4px"><svg class="a" style="left:0;top:0" width="8.300" height="8.300" viewBox="0 0 9 9"><path d="M2 4.600L3.800 6.400L7 2.600" stroke="#fff" stroke-width="1.500" fill="none"/></svg></div>
<svg class="a" style="left:318px;top:433.2px" width="18" height="18"><use href="#hosp"/></svg>
<svg class="a" style="left:694.5px;top:435.2px" width="11" height="11"><use href="#chart"/></svg>
<div class="btn" style="top:436.7px">Bu İşlem Bana Ait Değil!</div>
<div class="row" style="top:463px;height:33.8px;background:#fdebed"></div>
<div class="c" style="left:359.4px;top:468.6px">MAGNEZYUM</div>
<div class="c" style="left:471.4px;top:468.6px">1.8</div>
<div class="c" style="left:548.4px;top:468.6px">mg/dL</div>
<div class="c" style="left:617.4px;top:468.6px">L(1.9 - 2.5)</div>
<div class="c" style="left:758.4px;top:468.6px">15/12/2023</div>
<div class="cb" style="top:473.5px"><svg class="a" style="left:0;top:0" width="8.300" height="8.300" viewBox="0 0 9 9"><path d="M2 4.600L3.800 6.400L7 2.600" stroke="#fff" stroke-width="1.500" fill="none"/></svg></div>
<svg class="a" style="left:318px;top:467.3px" width="18" height="18"><use href="#hosp"/></svg>
<svg class="a" style="left:694.5px;top:469.3px" width="11" height="11"><use href="#chart"/></svg>
<div class="btn" style="top:470.8px">Bu İşlem Bana Ait Değil!</div>
<div class="row" style="top:496.8px;height:33.2px;background:#ffffff"></div>
<div class="c" style="left:359.4px;top:502.8px">KOLESTEROL</div>
<div class="c" style="left:471.4px;top:502.8px">175</div>
<div class="c" style="left:548.4px;top:502.8px">mg/dL</div>
<div class="c" style="left:617.4px;top:502.8px">N(0 - 200)</div>
<div class="c" style="left:758.4px;top:502.8px">15/12/2023</div>
<div class="cb" style="top:507.7px"><svg class="a" style="left:0;top:0" width="8.300" height="8.300" viewBox="0 0 9 9"><path d="M2 4.600L3.800 6.400L7 2.600" stroke="#fff" stroke-width="1.500" fill="none"/></svg></div>
<svg class="a" style="left:318px;top:501.5px" width="18" height="18"><use href="#hosp"/></svg>
<svg class="a" style="left:694.5px;top:503.5px" width="11" height="11"><use href="#chart"/></svg>
<div class="btn" style="top:505.0px">Bu İşlem Bana Ait Değil!</div>
</div></div>
<div class="a" style="left:1010px;top:525px;width:14px;height:24px;background:#f7f8f9"></div>
<div id="cookie" class="a" style="width:1019.500px"><span class="a" style="left:8px;top:.4px;white-space:nowrap">Sitemizde sizlere daha iyi hizmet verebilmek için gizliliğe uygun şekilde çerezler kullanmaktayız. Çerez politikamızı inceleyebilirsiniz. &nbsp;<u style="color:#dde0e4">Çerez Politikası</u></span>
<div class="a" style="left:918px;top:2.300px;width:94px;height:19.200px;background:#e21217;color:#fff;font-weight:700;font-size:7.500px;line-height:19.200px;text-align:center;border-radius:1px;letter-spacing:-.2px">Tamam</div></div>
<div id="task" class="a">
<div class="a" style="left:33px;top:0;width:191px;height:27.500px;background:#fff"></div>
<svg class="a" style="left:10.500px;top:9.0px" width="11" height="11" viewBox="0 0 11 11"><path d="M0 1.500L4.700 .8V5.200H0ZM5.300 .7L11 0V5.200H5.300ZM0 5.800H4.700V10.200L0 9.500ZM5.300 5.800H11V11L5.300 10.300Z" fill="#111"/></svg>
<svg class="a" style="left:39.500px;top:7.5px" width="12" height="12" viewBox="0 0 12 12"><circle cx="7" cy="4.800" r="3.400" fill="none" stroke="#222" stroke-width="1.100"/><path d="M4.600 7.300L.8 11.300" stroke="#222" stroke-width="1.200"/></svg>
<div class="a" style="left:59px;top:0;font-size:10.500px;line-height:27px;color:#222;transform-origin:0 50%;transform:scaleX(.92)">Ara</div>
<svg class="a" style="left:172px;top:1px" width="52" height="26.500" viewBox="0 0 52 26.500"><defs><linearGradient id="fl" x1="0" y1="1" x2="1" y2="0"><stop offset="0" stop-color="#f4f2f7"/><stop offset=".4" stop-color="#cbc7d6"/><stop offset="1" stop-color="#8d889e"/></linearGradient><linearGradient id="cn" x1="0" y1="0" x2="0" y2="1"><stop offset="0" stop-color="#d9531a"/><stop offset=".45" stop-color="#f58a1a"/><stop offset="1" stop-color="#ffd92e"/></linearGradient></defs><path d="M1 26.500L14 19.500L29.500 12.500L40 8.500L52 6V26.500Z" fill="url(#fl)"/><path d="M25 0H27V16.500H25ZM32.500 0H34V12H32.500ZM44.800 0H47V17H44.800ZM48.200 0H49.200V7H48.200Z" fill="#5d5873"/><path d="M35.5 6.5H36.5L37.2 10.5H34.8Z" fill="url(#cn)"/><ellipse cx="36" cy="10.8" rx="1.7" ry="0.60" fill="#c98a3a"/><path d="M42.0 4H43.0L43.7 9.5H41.3Z" fill="url(#cn)"/><ellipse cx="42.5" cy="9.8" rx="1.7" ry="0.60" fill="#c98a3a"/><path d="M18.5 9H19.5L21.5 17.7H16.5Z" fill="url(#cn)"/><ellipse cx="19" cy="18.0" rx="3.0" ry="0.80" fill="#c98a3a"/><path d="M38.8 7.5H39.8L41.9 17H36.7Z" fill="url(#cn)"/><ellipse cx="39.3" cy="17.3" rx="3.1" ry="0.83" fill="#c98a3a"/><path d="M9.6 8.1H10.6L13.5 21.3H6.7Z" fill="url(#cn)"/><ellipse cx="10.1" cy="21.6" rx="3.9" ry="1.09" fill="#c98a3a"/><path d="M28.4 6.8H29.4L33.1 23.2H24.7Z" fill="url(#cn)"/><ellipse cx="28.9" cy="23.5" rx="4.7" ry="1.34" fill="#c98a3a"/></svg>
<svg class="a" style="left:234px;top:8.5px" width="12" height="11" viewBox="0 0 12 11"><g stroke="#34444a" fill="none"><path d="M.6 .3V10.700M7.400 .3V10.700" stroke-width="1"/><path d="M.6 3H7.400M.6 8.200H7.400" stroke-width="1.400"/><path d="M10.500 .3V10.700" stroke-width="1"/></g><circle cx="10.500" cy="4.400" r=".9" fill="#111"/></svg>
<svg class="a" style="left:266px;top:7.5px" width="16" height="13" viewBox="0 0 16 13"><path d="M0 1.200Q0 .3 1 .3H5.500L7 1.800H15Q16 1.800 16 2.800V11.500Q16 12.500 15 12.500H1Q0 12.500 0 11.500Z" fill="#f4b73f"/><path d="M0 4H16V11.500Q16 12.500 15 12.500H1Q0 12.500 0 11.500Z" fill="#fbd56e"/><path d="M3.500 7.500Q3.500 6.500 4.500 6.500H11.500Q12.500 6.500 12.500 7.500V12.500H10V9.500H6V12.500H3.500Z" fill="#3b8fd6"/></svg>
<svg class="a" style="left:299px;top:6.0px" width="16" height="16" viewBox="0 0 16 16"><path d="M5 4V2.500Q5 1 6.500 1H9.500Q11 1 11 2.500V4" stroke="#1c68b8" stroke-width="1.300" fill="none"/><path d="M.5 4H15.500V13.500Q15.500 15.500 13.500 15.500H2.500Q.5 15.500 .5 13.500Z" fill="#155fae"/><rect x="5" y="6.500" width="2.700" height="2.700" fill="#f25022"/><rect x="8.300" y="6.500" width="2.700" height="2.700" fill="#7fba00"/><rect x="5" y="9.800" width="2.700" height="2.700" fill="#00a4ef"/><rect x="8.300" y="9.800" width="2.700" height="2.700" fill="#ffb900"/></svg>
<svg class="a" style="left:333px;top:6.5px" width="15" height="13" viewBox="0 0 15 13"><rect x="0" y="0" width="15" height="11" fill="#203a63"/><rect x="0" y="0" width="15" height="5.500" fill="#2a86d6"/><rect x="1" y="5" width="13" height="1.500" fill="#9fd0f2"/><rect x="0" y="11" width="15" height="2" fill="#f4f7fa"/></svg>
<svg class="a" style="left:366px;top:7.5px" width="13" height="13" viewBox="0 0 13 13"><rect x="1.500" y="0" width="11.500" height="12" fill="#8ec5ea"/><rect x="0" y="1" width="11.500" height="12" fill="#b9dcf3"/><circle cx="5.800" cy="7" r="4" fill="#f08a1c"/><path d="M4.500 4.800L8.300 7L4.500 9.200Z" fill="#fff"/></svg>
<svg class="a" style="left:398px;top:6.0px" width="17" height="17" viewBox="0 0 17 17"><defs><linearGradient id="eg" x1="0" y1="1" x2="1" y2="0"><stop offset="0" stop-color="#0b4f9c"/><stop offset=".5" stop-color="#1b8fe0"/><stop offset=".8" stop-color="#35c1b0"/><stop offset="1" stop-color="#58d86a"/></linearGradient></defs><circle cx="8.500" cy="8.500" r="8" fill="url(#eg)"/><path d="M1 10.500Q2.500 5.800 7.800 5.800Q11.800 5.800 11.800 9Q11.800 10.800 10.300 11.500Q12 13.200 15.200 12Q13 16.500 8.500 16.500Q3.500 16.500 1 10.500Z" fill="#1467c0"/><path d="M6.300 9.800Q6.300 7.500 8.600 7.500Q10.500 7.500 10.500 9.200Q10.500 10.500 9.600 11.200Q10.500 12.800 13.500 12.600Q11 14.300 8.800 13.300Q6.300 12.300 6.300 9.800Z" fill="#d6e8ee"/></svg>
<svg class="a" style="left:431.500px;top:6.5px" width="17" height="14" viewBox="0 0 17 14"><path d="M0 5L8.500 0L17 5V14H0Z" fill="#1565b8"/><path d="M1.500 4.500H15.500V10H1.500Z" fill="#fff"/><path d="M0 5.500L8.500 10.500L17 5.500V14H0Z" fill="#2f9bea"/></svg>
<div class="a" style="left:456px;top:0;width:32px;height:27px;background:#e2eff3"></div>
<div class="a" style="left:456px;top:25.500px;width:32px;height:1.500px;background:#4aa3b7"></div>
<svg class="a" style="left:464px;top:6.0px" width="17" height="17" viewBox="0 0 17 17"><circle cx="8.500" cy="8.500" r="8" fill="#e33b2e"/><path d="M8.500 8.500L1.600 4.500A8 8 0 0 0 8.500 16.500L12 10.500Z" fill="#2da94f"/><path d="M8.500 8.500L12 10.500L8.500 16.500A8 8 0 0 0 15.400 4.500H8.500Z" fill="#fcc31d"/><circle cx="8.500" cy="8.500" r="3.700" fill="#fff"/><circle cx="8.500" cy="8.500" r="2.900" fill="#4587f4"/></svg>
<div class="a" style="left:646px;top:0;font-size:8.800px;line-height:27px;color:#222;transform-origin:0 50%;transform:scaleX(.93)">Adres</div>
<div class="a" style="left:669px;top:3.600px;width:154.700px;height:21px;background:#fff;border:1px solid #e6eef0"></div>
<div class="a" style="left:803px;top:4.400px;width:1px;height:19px;background:#e3e8ea"></div>
<svg class="a" style="left:789.200px;top:13.0px" width="6" height="4" viewBox="0 0 6 4"><path d="M.5 .5L3 3L5.500 .5" stroke="#555" stroke-width=".9" fill="none"/></svg>
<svg class="a" style="left:809.200px;top:10.0px" width="9" height="9" viewBox="0 0 9 9"><path d="M6.500 1.500A3.600 3.600 0 1 1 2.500 1.500" stroke="#666" stroke-width="1" fill="none"/><path d="M2.500 0V2.200H.5" stroke="#666" stroke-width=".9" fill="none"/></svg>
<svg class="a" style="left:832px;top:6.5px" width="16" height="16" viewBox="0 0 16 16"><path d="M.5 8Q1.500 3 8 2.500Q14.500 3 15.500 8Q13 6.500 11 8Q9.500 6.500 8 8Q6.500 6.500 5 8Q3 6.500 .5 8Z" fill="#52a5ea"/><path d="M8 2.500V13Q8 15 6.300 15Q5 15 5 13.500" stroke="#2a6fb5" stroke-width="1.100" fill="none"/><circle cx="11" cy="1.500" r=".7" fill="#52a5ea"/><circle cx="13.500" cy="2.500" r=".7" fill="#52a5ea"/><circle cx="8.500" cy=".8" r=".6" fill="#52a5ea"/></svg>
<svg class="a" style="left:865px;top:10.5px" width="10" height="6" viewBox="0 0 10 6"><path d="M.7 5.300L5 1L9.300 5.300" stroke="#222" stroke-width="1.100" fill="none"/></svg>
<svg class="a" style="left:880px;top:8.0px" width="12" height="12" viewBox="0 0 12 12"><g stroke="#3a3a3a" stroke-width=".8" fill="none"><rect x="1" y="1.500" width="7" height="6.500" rx="1.200"/><path d="M8 4L11 2.500V7L8 5.500"/><path d="M2 10.500H7.500M4.700 8V10.500"/></g><circle cx="4.500" cy="4.700" r="1" fill="#3a3a3a"/></svg>
<svg class="a" style="left:895.500px;top:8.5px" width="12" height="11" viewBox="0 0 12 11"><path d="M.5 3.800H2.500L5 1.300V9.700L2.500 7.200H.5Z" stroke="#333" stroke-width=".9" fill="none"/><path d="M6.800 3.500Q7.800 5.500 6.800 7.500M8.500 2.300Q10.300 5.500 8.500 8.700M10.300 1.200Q12.500 5.500 10.300 9.800" stroke="#333" stroke-width=".8" fill="none"/></svg>
<svg class="a" style="left:911.500px;top:10.0px" width="13" height="8" viewBox="0 0 13 8"><rect x="1.800" y=".8" width="10.500" height="6.200" fill="#222"/><rect x=".3" y="2.500" width="1.500" height="3" fill="#222"/><path d="M2 1L4 .2L3.500 2Z" fill="#fff"/></svg>
<svg class="a" style="left:930px;top:8.0px" width="13" height="12" viewBox="0 0 13 12"><g stroke="#333" stroke-width="1" fill="none"><ellipse cx="4.200" cy="8.300" rx="3" ry="2.200" transform="rotate(-40 4.200 8.300)"/><ellipse cx="8.800" cy="4" rx="3" ry="2.200" transform="rotate(-40 8.800 4)"/><path d="M10.500 1L12.300 .3M11.500 3L12.700 3"/></g></svg>
<div class="a" style="left:939.800px;top:1.700px;width:56px;text-align:center;font-size:9px;line-height:12.300px;color:#222;white-space:nowrap;transform:scaleX(.86)">18:42<br>15.12.2023</div>
<svg class="a" style="left:996px;top:8.0px" width="17" height="17" viewBox="0 0 17 17"><path d="M1 .5H11.500V8.500H4.500L1 11.500Z" fill="#1b1b1b"/><path d="M3 3H9.500M3 5.500H9.500" stroke="#cce5e9" stroke-width=".8"/><circle cx="11.300" cy="11.300" r="4.300" fill="#cce5e9" stroke="#444" stroke-width=".8"/><text x="11.300" y="14" font-size="7.500" text-anchor="middle" fill="#111" font-family="Liberation Sans,sans-serif">1</text></svg>
</div>
</body></html>
